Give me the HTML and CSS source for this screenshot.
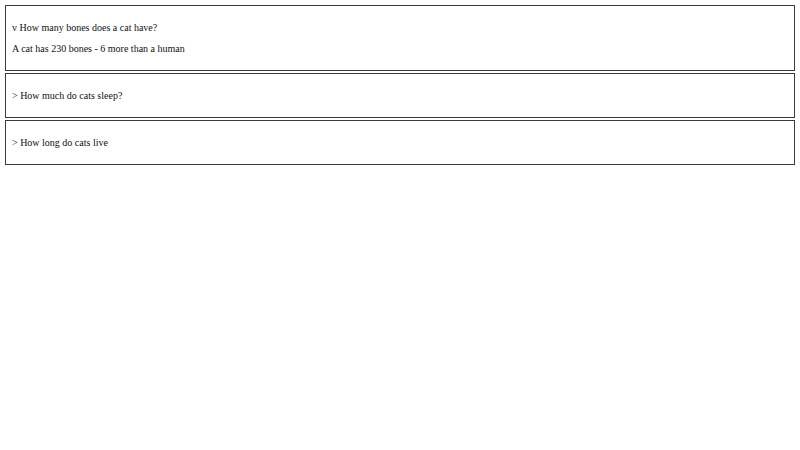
FILE: index.html
```html
<!DOCTYPE html>
<html>
<head>
<meta charset="utf-8">
<link rel="stylesheet" href="styles.css">
</head>
<body>
<div class="faq">
  <div class="item">
    <div class="question">v How many bones does a cat have?</div>
    <div class="answer">A cat has 230 bones - 6 more than a human</div>
  </div>
  <div class="item">
    <div class="question">&gt; How much do cats sleep?</div>
  </div>
  <div class="item">
    <div class="question">&gt; How long do cats live</div>
  </div>
</div>
</body>
</html>
```
FILE: styles.css
```css
body {
  margin: 5px;
  font-family: "Liberation Serif", "Times New Roman", serif;
  font-size: 10px;
  color: #111;
  background: #fff;
}
.faq {
  display: flex;
  flex-direction: column;
  gap: 2px;
}
.item {
  border: 1px solid #3a3a3a;
  padding: 16px 6px;
  display: flex;
  flex-direction: column;
  gap: 10px;
  line-height: 11px;
}
```
